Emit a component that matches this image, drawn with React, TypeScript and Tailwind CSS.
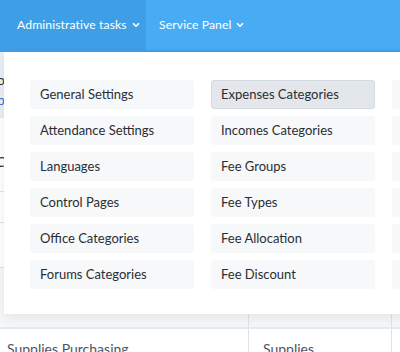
import { ChevronDown } from "lucide-react";

const colOne = ["General Settings", "Attendance Settings", "Languages", "Control Pages", "Office Categories", "Forums Categories"];
const colTwo = ["Expenses Categories", "Incomes Categories", "Fee Groups", "Fee Types", "Fee Allocation", "Fee Discount"];
const colThree = ["Fee Reminder", "Payment Methods", "Bank Accounts", "Tax Settings", "Backup", "Updates"];

function MenuItem({ label, active }: { label: string; active?: boolean }) {
  return (
    <div
      className={`h-[29px] flex items-center rounded-[3px] text-[13px] text-[#2a2e33] whitespace-nowrap overflow-hidden ${
        active ? "bg-[#e3e7ec] border border-[#d3d9e0] pl-[9px]" : "bg-[#f7f8fa] pl-[10px]"
      }`}
    >
      {label}
    </div>
  );
}

export default function App() {
  return (
    <div className="relative w-[400px] h-[352px] overflow-hidden bg-white" style={{ fontFamily: "Lato, 'Open Sans', sans-serif" }}>
      {/* Top nav */}
      <div className="h-[52px] flex bg-[#48acf4] border-b-2 border-[#3f9fe6] text-white text-[12.2px] tracking-[0.1px] whitespace-nowrap">
        <div className="flex items-center gap-[4px] pl-[17px] w-[146px] bg-[#3f9fe6]">
          Administrative tasks
          <ChevronDown size={10} strokeWidth={4} />
        </div>
        <div className="flex items-center gap-[3px] pl-[13px]">
          Service Panel
          <ChevronDown size={10} strokeWidth={4} />
        </div>
      </div>

      {/* Page behind the menu */}
      <div className="flex flex-col text-[14px] text-[#4a5566]">
        <div className="h-[66px] w-[4px] overflow-hidden bg-[#eaeff5] pt-[18px] leading-[20px]">
          <div className="text-[#2d3440] -ml-[3px]">o</div>
          <div className="text-[#2f73d8] -ml-[3px]">b</div>
        </div>
        <div className="h-[74px] w-[4px] overflow-hidden border-b border-[#dfe3e8] pt-[33px]">
          <div className="text-[#2d3440] -ml-[4px]">C</div>
        </div>
        <div className="h-[31px] border-b border-[#dfe3e8]" />
        <div className="h-[45px] border-b border-[#dfe3e8]" />
        <div className="h-[61px] flex bg-[#f6f7f9] border-b-2 border-[#e6e9ee]">
          <div className="w-[249px] border-r border-[#dfe3e8]" />
          <div className="w-[143px] border-r border-[#dfe3e8]" />
        </div>
        <div className="flex h-[40px]">
          <div className="w-[249px] border-r border-[#dfe3e8] pl-[7px] pt-[9px]">Supplies Purchasing</div>
          <div className="w-[143px] border-r border-[#dfe3e8] pl-[14px] pt-[9px]">Supplies</div>
        </div>
      </div>

      {/* Dropdown menu */}
      <div className="absolute left-[4px] top-[52px] w-[430px] h-[262px] bg-white shadow-[0_4px_12px_rgba(0,0,0,0.08)] pl-[26px] pt-[28px]">
        <div className="grid grid-cols-[164px_164px_164px] gap-x-[17px]">
          <div className="flex flex-col gap-[7px]">
            {colOne.map((l) => (
              <MenuItem key={l} label={l} />
            ))}
          </div>
          <div className="flex flex-col gap-[7px]">
            {colTwo.map((l, i) => (
              <MenuItem key={l} label={l} active={i === 0} />
            ))}
          </div>
          <div className="flex flex-col gap-[7px]">
            {colThree.map((l) => (
              <MenuItem key={l} label={l} />
            ))}
          </div>
        </div>
      </div>
    </div>
  );
}
